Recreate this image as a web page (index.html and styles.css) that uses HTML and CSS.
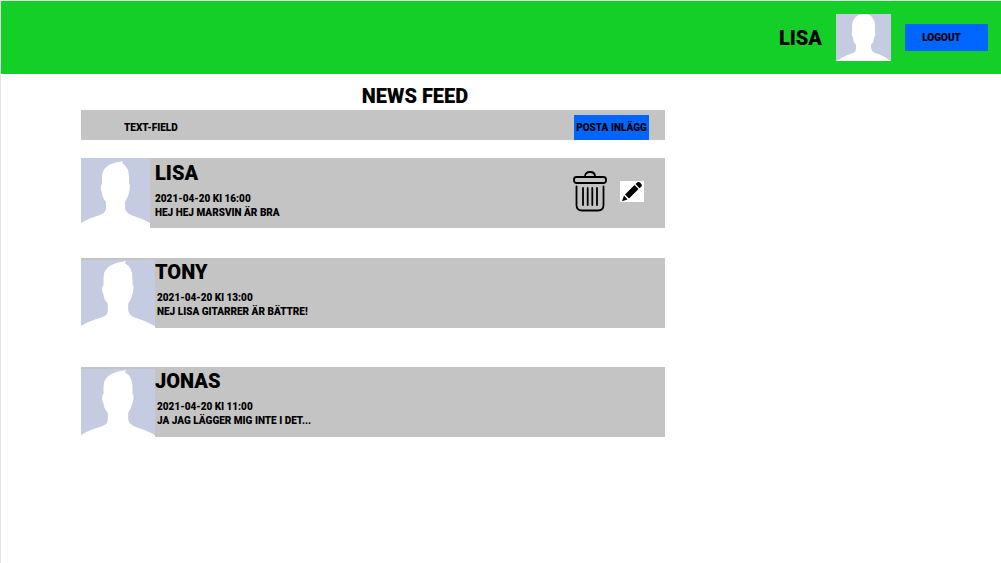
FILE: index.html
```html
<!DOCTYPE html>
<html lang="sv">
<head>
<meta charset="utf-8">
<meta name="viewport" content="width=device-width, initial-scale=1">
<title>News feed</title>
<link rel="stylesheet" href="styles.css">
</head>
<body>
<svg class="symbols" aria-hidden="true">
  <g id="person">
    <path fill="#c5cbe0" d="M0 0H69V70H0Z"/>
    <path fill="#fff" d="M0 65Q8 60 19 57Q25 55 25 50V44Q21 39 21 35Q19 31 20 27L21 26V19Q21 6 40 3.500L42 3L41 5Q48 9 48 19V26L49 27Q49 31 48 35Q47 39 44 44V50Q45 55 50 57Q60 60 69 65V70H0Z"/>
  </g>
</svg>
<header class="topbar">
  <span class="user">LISA</span>
  <svg class="user-photo" viewBox="0 0 55 47" preserveAspectRatio="none" role="img" aria-label="Lisa">
    <path fill="#c5cbe0" d="M0 0H55V47H0Z"/>
    <path fill="#fff" d="M0 47L2 46Q10 41 17 39Q20 38 20 34V31Q17 28 17 24Q15 21 16 17V11Q17 1 27 0H30Q38 1 39 11V17Q40 21 38 24Q38 28 35 31V34Q36 38 39 39Q47 41 53 46L55 47Z"/>
  </svg>
  <button class="button logout" type="button">LOGOUT</button>
</header>
<main class="feed">
  <h1 class="title">NEWS FEED</h1>
  <form class="composer">
    <input class="field" type="text" placeholder="TEXT-FIELD" aria-label="Text-field">
    <button class="button post-button" type="button">POSTA INLÄGG</button>
  </form>
  <article class="post own">
    <svg class="photo" viewBox="0 0 69 70" preserveAspectRatio="none" role="img" aria-label="Lisa"><use href="#person"/></svg>
    <div class="body">
      <h2 class="name">LISA</h2>
      <p class="text"><time datetime="2021-04-20T16:00">2021-04-20 Kl 16:00</time><br>HEJ HEJ MARSVIN ÄR BRA</p>
    </div>
    <div class="actions">
      <button class="icon-button" type="button" aria-label="Ta bort">
        <svg class="trash" viewBox="0 0 34 41" fill="none" stroke="#000" stroke-width="1.800" stroke-linecap="round">
          <rect x="1" y="6" width="32" height="6" rx="2.500"/>
          <path d="M12 5.500Q12 1 17 1T22 5.500M3.500 15.500V34Q3.500 39.500 9 39.500H25Q30.500 39.500 30.500 34V15.500M10 17V34M14.700 17V34M19.300 17V34M24 17V34"/>
        </svg>
      </button>
      <button class="icon-button edit" type="button" aria-label="Redigera">
        <svg class="pencil" viewBox="0 0 24 21">
          <path d="M5 13.500L14.500 4L18.500 8L9 17.500ZM15.500 3L17.500 1.200Q19 .5 20.500 2L21.500 3.200Q22.500 4.500 21.500 5.500L19.500 7.200ZM4 14.500L7.500 18.500L2 20.200Z"/>
        </svg>
      </button>
    </div>
  </article>
  <article class="post">
    <svg class="photo" viewBox="0 2 69 65" preserveAspectRatio="none" role="img" aria-label="Tony"><use href="#person"/></svg>
    <div class="body">
      <h2 class="name">TONY</h2>
      <p class="text"><time datetime="2021-04-20T13:00">2021-04-20 Kl 13:00</time><br>NEJ LISA GITARRER ÄR BÄTTRE!</p>
    </div>
  </article>
  <article class="post">
    <svg class="photo" viewBox="0 2 69 65" preserveAspectRatio="none" role="img" aria-label="Jonas"><use href="#person"/></svg>
    <div class="body">
      <h2 class="name">JONAS</h2>
      <p class="text"><time datetime="2021-04-20T11:00">2021-04-20 Kl 11:00</time><br>JA JAG LÄGGER MIG INTE I DET...</p>
    </div>
  </article>
</main>
</body>
</html>
```
FILE: styles.css
```css
* { box-sizing: border-box; }

body {
  margin: 0;
  min-height: 100vh;
  border: solid #e5e5e5;
  border-width: 1px 0 0 1px;
  background: #fff;
  color: #000;
  font: 900 10px/14px Roboto, "Liberation Sans", sans-serif;
}

.symbols {
  position: absolute;
  width: 0;
  height: 0;
}

.topbar {
  display: flex;
  align-items: center;
  justify-content: flex-end;
  gap: 14px;
  padding: 13px;
  background: #14cf28;
}

.user,
.title,
.name {
  margin: 0;
  font-size: 20px;
  font-weight: 900;
  line-height: 24px;
}

.user-photo { width: 55px; height: 47px; }

.button {
  border: 0;
  padding: 0 5px;
  background: #0066ff;
  color: inherit;
  font: inherit;
  white-space: nowrap;
}

.logout {
  width: 83px;
  height: 27px;
  padding-right: 15px;
}

.feed {
  width: 58.4%;
  margin-left: 8%;
  padding-top: 10px;
}

.title {
  padding-left: 84px;
  text-align: center;
}

.composer {
  display: flex;
  align-items: flex-end;
  height: 30px;
  margin-top: 2px;
  padding-right: 16px;
  background: #c4c4c4;
}

.field {
  flex: 1;
  min-width: 0;
  height: 30px;
  border: 0;
  padding: 4px 8px 0 43px;
  background: transparent;
  color: inherit;
  font: inherit;
}

.field::placeholder { color: #000; opacity: 1; }

.post-button { min-width: 75px; height: 25px; padding: 0; }

.post {
  display: flex;
  min-height: 70px;
  margin-top: 39px;
  padding-top: 2px;
  background: #c4c4c4;
}

.own {
  margin: 18px 0 -9px;
  padding-top: 0;
}

.photo {
  flex: none;
  width: 74px;
  height: 68px;
}

.own .photo { width: 69px; height: 70px; }

.body { flex: 1; }

.own .body { padding: 3px 0 0 5px; }

.text {
  margin: 7px 0 0;
  padding-left: 2px;
}

.own .text { padding-left: 0; }

.actions {
  display: flex;
  align-items: center;
  gap: 13px;
  padding: 0 21px 4px 0;
}

.icon-button {
  display: flex;
  border: 0;
  padding: 0;
  background: transparent;
}

.edit { background: #fff; }
.trash { width: 34px; height: 41px; }
.pencil { width: 24px; height: 21px; }
```
